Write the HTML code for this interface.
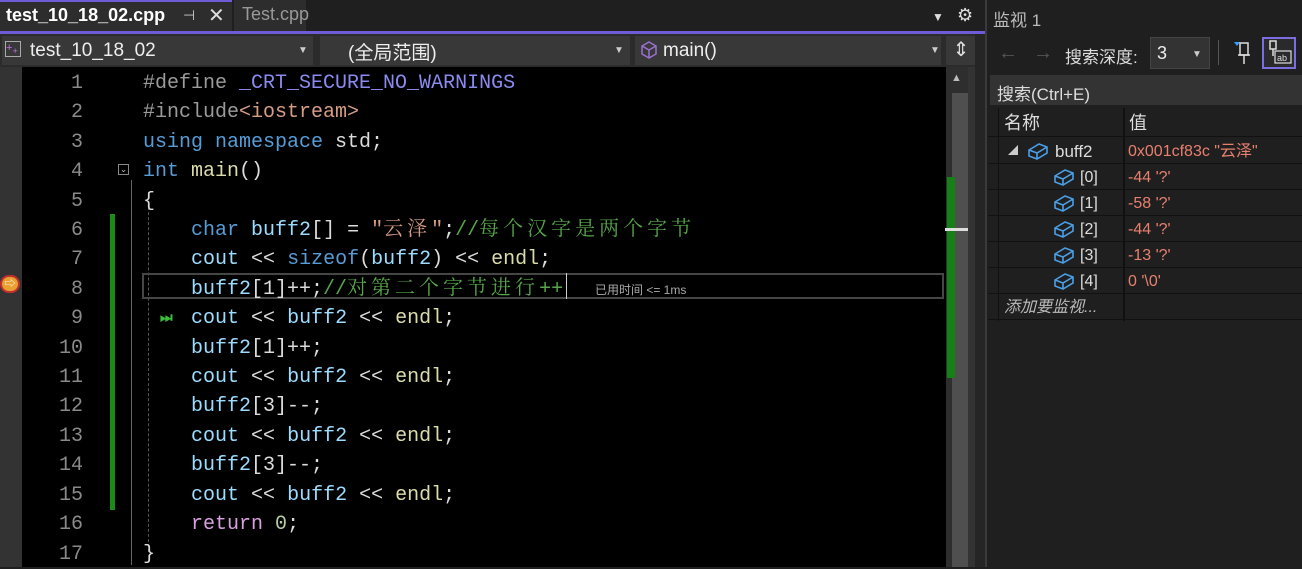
<!DOCTYPE html>
<html><head><meta charset="utf-8"><style>
*{margin:0;padding:0;box-sizing:border-box}
body{width:1302px;height:567px;overflow:hidden;background:#1f1f1f;position:relative;font-family:"Liberation Sans","Noto Sans CJK SC",sans-serif;color:#ddd}
.a{position:absolute}
.code{font-family:"Liberation Mono","Noto Serif CJK SC",monospace;font-size:20px;white-space:pre;line-height:29.4px}
.ln{color:#8a8a8a;text-align:right;width:40px;left:43px}
.kw{color:#569cd6}.id{color:#9cdcfe}.st{color:#d69d85}.cm{color:#57a64a}.pp{color:#9b9b9b}.mc{color:#8a8af0}.fn{color:#dcdcaa}.tx{color:#dcdcdc}.ctl{color:#d8a0df}.num{color:#b5cea8}
.cj{letter-spacing:4px}
.row{position:absolute;left:0;width:100%;height:26px;border-bottom:1px solid #111;font-size:16px;line-height:28px}
</style></head><body>
<div class="a" style="left:0;top:0;width:985px;height:31px;background:#1f1f1f"></div>
<div class="a" style="left:0;top:0;width:232px;height:31px;background:#2d2d2d;border-top:2px solid #6e5bd6"></div>
<div class="a" style="left:6px;top:5px;font-size:18px;font-weight:bold;color:#fff">test_10_18_02.cpp</div>
<div class="a" style="left:183px;top:7px;font-size:14px;color:#ccc">⊣</div>
<div class="a" style="left:208px;top:3px;font-size:20px;color:#ddd">✕</div>
<div class="a" style="left:234px;top:0;width:72px;height:31px;background:#2d2d2d"></div>
<div class="a" style="left:242px;top:4px;font-size:18px;color:#999">Test.cpp</div>
<div class="a" style="left:932px;top:10px;font-size:12px;color:#ddd">▼</div>
<div class="a" style="left:957px;top:5px;font-size:18px;color:#ddd">⚙</div>
<div class="a" style="left:0;top:31px;width:985px;height:3px;background:#6e5bd6"></div>
<div class="a" style="left:0;top:34px;width:985px;height:33px;background:#2b2b2b"></div>
<div class="a" style="left:2px;top:36px;width:311px;height:29px;background:#383838"></div>
<div class="a" style="left:5px;top:41px;width:16px;height:16px;border:1px solid #aaa;color:#c070e0;font-size:11px;line-height:12px">+<sub>+</sub></div>
<div class="a" style="left:30px;top:40px;font-size:19px;color:#eee">test_10_18_02</div>
<div class="a" style="left:298px;top:45px;font-size:10px;color:#ccc">▼</div>
<div class="a" style="left:320px;top:36px;width:310px;height:29px;background:#383838"></div>
<div class="a" style="left:348px;top:38px;font-size:19px;color:#eee">(全局范围)</div>
<div class="a" style="left:614px;top:45px;font-size:10px;color:#ccc">▼</div>
<div class="a" style="left:635px;top:36px;width:306px;height:29px;background:#383838"></div>
<svg class="a" style="left:639px;top:40px" width="20" height="20" viewBox="0 0 20 20"><path d="M10 2L17 6V14L10 18L3 14V6Z M3 6L10 10L17 6 M10 10V18" fill="none" stroke="#9a70d0" stroke-width="1.5"/></svg>
<div class="a" style="left:663px;top:40px;font-size:19px;color:#eee">main()</div>
<div class="a" style="left:930px;top:45px;font-size:10px;color:#ccc">▼</div>
<div class="a" style="left:946px;top:36px;width:30px;height:29px;background:#383838;text-align:center;font-size:20px;color:#ddd;line-height:28px">⇕</div>
<div class="a" style="left:0;top:67px;width:22px;height:500px;background:#333"></div>
<div class="a" style="left:22px;top:67px;width:924px;height:500px;background:#000"></div>
<div class="a" style="left:110px;top:214px;width:5px;height:296px;background:#1b8a1b"></div>
<div class="a" style="left:131px;top:180px;height:385px;border-left:1px solid #666"></div>
<div class="a" style="left:148px;top:192px;height:360px;border-left:1px dashed #555"></div>
<div class="a" style="left:118px;top:164px;width:11px;height:11px;border:1px solid #888;color:#bbb;font-size:9px;line-height:9px;text-align:center">⌄</div>
<div class="a" style="left:142px;top:273px;width:802px;height:26px;border:2px solid #464646"></div>
<div class="a" style="left:566px;top:273px;height:26px;border-left:1px solid #ccc"></div>
<div class="a" style="left:595px;top:281px;font-size:12px;color:#aaa">已用时间 &lt;= 1ms</div>
<div class="a" style="left:0;top:275px;width:20px;height:18px;border-radius:9px;background:#e8a030;border:2px solid #c03030;color:#fff;font-size:11px;line-height:14px;text-align:center">⇨</div>
<div class="a" style="left:160px;top:309px;color:#3bbf3b;font-size:14px;font-weight:bold">⏭</div>
<div class="a code ln" style="top:69px">1
2
3
4
5
6
7
8
9
10
11
12
13
14
15
16
17</div>
<div class="a code" style="left:143px;top:69px"><span class="pp">#define</span> <span class="mc">_CRT_SECURE_NO_WARNINGS</span>
<span class="pp">#include</span><span class="st">&lt;iostream&gt;</span>
<span class="kw">using namespace</span> <span class="tx">std;</span>
<span class="kw">int</span> <span class="fn">main</span><span class="tx">()</span>
<span class="tx">{</span>
    <span class="kw">char</span> <span class="id">buff2</span><span class="tx">[] = </span><span class="st">"<span class="cj">云泽</span>"</span><span class="tx">;</span><span class="cm">//<span class="cj">每个汉字是两个字节</span></span>
    <span class="id">cout</span> <span class="tx">&lt;&lt;</span> <span class="kw">sizeof</span><span class="tx">(</span><span class="id">buff2</span><span class="tx">) &lt;&lt;</span> <span class="fn">endl</span><span class="tx">;</span>
    <span class="id">buff2</span><span class="tx">[1]++;</span><span class="cm">//<span class="cj">对第二个字节进行</span>++</span>
    <span class="id">cout</span> <span class="tx">&lt;&lt;</span> <span class="id">buff2</span> <span class="tx">&lt;&lt;</span> <span class="fn">endl</span><span class="tx">;</span>
    <span class="id">buff2</span><span class="tx">[1]++;</span>
    <span class="id">cout</span> <span class="tx">&lt;&lt;</span> <span class="id">buff2</span> <span class="tx">&lt;&lt;</span> <span class="fn">endl</span><span class="tx">;</span>
    <span class="id">buff2</span><span class="tx">[3]--;</span>
    <span class="id">cout</span> <span class="tx">&lt;&lt;</span> <span class="id">buff2</span> <span class="tx">&lt;&lt;</span> <span class="fn">endl</span><span class="tx">;</span>
    <span class="id">buff2</span><span class="tx">[3]--;</span>
    <span class="id">cout</span> <span class="tx">&lt;&lt;</span> <span class="id">buff2</span> <span class="tx">&lt;&lt;</span> <span class="fn">endl</span><span class="tx">;</span>
    <span class="ctl">return</span> <span class="num">0</span><span class="tx">;</span>
<span class="tx">}</span></div>
<div class="a" style="left:946px;top:67px;width:22px;height:500px;background:#2e2e2e"></div>
<div class="a" style="left:952px;top:93px;width:16px;height:474px;background:#4f4f4f"></div>
<div class="a" style="left:951px;top:72px;font-size:11px;color:#bbb">▲</div>
<div class="a" style="left:947px;top:177px;width:8px;height:201px;background:#158015"></div>
<div class="a" style="left:945px;top:228px;width:29px;height:3px;background:#ddd"></div>
<div class="a" style="left:968px;top:67px;width:7px;height:500px;background:#333"></div>
<div class="a" style="left:975px;top:34px;width:10px;height:533px;background:#252525"></div>
<div class="a" style="left:985px;top:0;width:2px;height:567px;background:#3a3a3a"></div>
<div class="a" style="left:993px;top:6px;font-size:17px;color:#bbb">监视 1</div>
<div class="a" style="left:998px;top:42px;font-size:20px;color:#555">←</div>
<div class="a" style="left:1033px;top:42px;font-size:20px;color:#555">→</div>
<div class="a" style="left:1065px;top:43px;font-size:17px;color:#ddd">搜索深度:</div>
<div class="a" style="left:1150px;top:37px;width:60px;height:32px;background:#333;border:1px solid #444"></div>
<div class="a" style="left:1157px;top:43px;font-size:18px;color:#eee">3</div>
<div class="a" style="left:1192px;top:49px;font-size:10px;color:#ccc">▼</div>
<div class="a" style="left:1218px;top:40px;width:1px;height:25px;background:#555"></div>
<svg class="a" style="left:1232px;top:40px" width="24" height="26"><path d="M2 2L8 2L5 6Z" fill="#3aa0ff"/><rect x="8" y="3" width="8" height="12" fill="none" stroke="#ddd" stroke-width="1.5"/><path d="M12 15V24M6 15H18" stroke="#ddd" stroke-width="1.5"/></svg>
<div class="a" style="left:1262px;top:37px;width:34px;height:32px;border:2px solid #7a6ee0;background:#2a2a2a"></div>
<svg class="a" style="left:1266px;top:40px" width="28" height="26"><rect x="4" y="1" width="6" height="8" fill="none" stroke="#ddd" stroke-width="1.5"/><path d="M7 9V16" stroke="#ddd" stroke-width="1.5"/><rect x="9" y="11" width="16" height="12" fill="none" stroke="#ddd" stroke-width="1.2"/><text x="11" y="21" font-size="9" fill="#ddd" font-family="Liberation Sans">ab</text></svg>
<div class="a" style="left:990px;top:75px;width:312px;height:30px;background:#333"></div>
<div class="a" style="left:997px;top:80px;font-size:17px;color:#ddd">搜索(Ctrl+E)</div>
<div class="a" style="left:988px;top:108px;width:314px;height:460px">
<div class="a" style="left:10px;top:0;width:1px;height:213px;background:#111"></div>
<div class="a" style="left:135px;top:0;width:2px;height:213px;background:#111"></div>
<div class="row" style="top:0;height:29px;line-height:31px;font-size:18px"><span style="margin-left:16px">名称</span><span class="a" style="left:141px">值</span></div>
<div class="row" style="top:30px"><span class="a" style="left:20px;font-size:10px;color:#ccc">◢</span><svg class="a" style="left:39px;top:3px" width="22" height="20"><path d="M2 9L12 3L20 6L20 12L10 18L2 15Z M2 9L10 12L20 6 M10 12V18" fill="none" stroke="#4aa0e8" stroke-width="1.6"/></svg><span class="a" style="left:67px;font-size:17px">buff2</span><span class="a" style="left:140px;color:#e8806f">0x001cf83c "云泽"</span></div>
<div class="row" style="top:56px"><svg class="a" style="left:65px;top:3px" width="22" height="20"><path d="M2 9L12 3L20 6L20 12L10 18L2 15Z M2 9L10 12L20 6 M10 12V18" fill="none" stroke="#4aa0e8" stroke-width="1.6"/></svg><span class="a" style="left:92px">[0]</span><span class="a" style="left:140px;color:#e8806f">-44 '?'</span></div>
<div class="row" style="top:82px"><svg class="a" style="left:65px;top:3px" width="22" height="20"><path d="M2 9L12 3L20 6L20 12L10 18L2 15Z M2 9L10 12L20 6 M10 12V18" fill="none" stroke="#4aa0e8" stroke-width="1.6"/></svg><span class="a" style="left:92px">[1]</span><span class="a" style="left:140px;color:#e8806f">-58 '?'</span></div>
<div class="row" style="top:108px"><svg class="a" style="left:65px;top:3px" width="22" height="20"><path d="M2 9L12 3L20 6L20 12L10 18L2 15Z M2 9L10 12L20 6 M10 12V18" fill="none" stroke="#4aa0e8" stroke-width="1.6"/></svg><span class="a" style="left:92px">[2]</span><span class="a" style="left:140px;color:#e8806f">-44 '?'</span></div>
<div class="row" style="top:134px"><svg class="a" style="left:65px;top:3px" width="22" height="20"><path d="M2 9L12 3L20 6L20 12L10 18L2 15Z M2 9L10 12L20 6 M10 12V18" fill="none" stroke="#4aa0e8" stroke-width="1.6"/></svg><span class="a" style="left:92px">[3]</span><span class="a" style="left:140px;color:#e8806f">-13 '?'</span></div>
<div class="row" style="top:160px"><svg class="a" style="left:65px;top:3px" width="22" height="20"><path d="M2 9L12 3L20 6L20 12L10 18L2 15Z M2 9L10 12L20 6 M10 12V18" fill="none" stroke="#4aa0e8" stroke-width="1.6"/></svg><span class="a" style="left:92px">[4]</span><span class="a" style="left:140px;color:#e8806f">0 '\0'</span></div>
<div class="row" style="top:186px"><span class="a" style="left:16px;font-style:italic;color:#bbb">添加要监视...</span></div>
</div>
</body></html>
